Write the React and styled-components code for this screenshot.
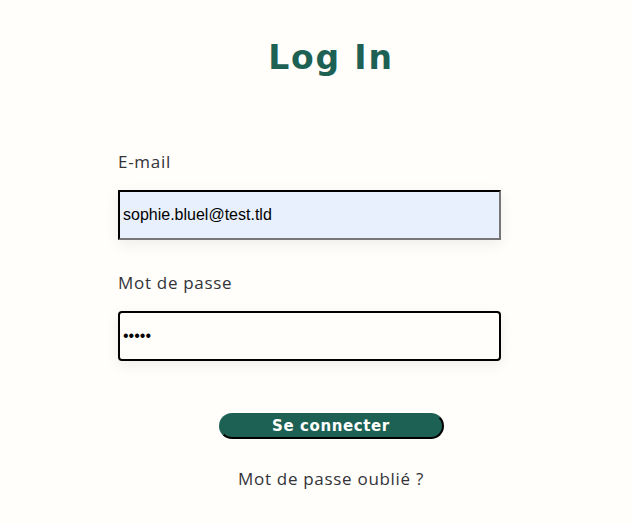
import React from "react";
import styled, { createGlobalStyle } from "styled-components";

const GlobalStyle = createGlobalStyle`
  body {
    margin: 0;
    background-color: #fffefb;
    font-family: "Open Sans", "Liberation Sans", sans-serif;
  }
`;

const Page = styled.main`
  display: flex;
  padding: 38px 0 40px 118px;
`;

const Section = styled.section`
  width: 426px;
  display: flex;
  flex-direction: column;
  align-items: center;
`;

const Title = styled.h2`
  margin: 0;
  font-family: "DejaVu Sans", sans-serif;
  font-weight: 700;
  font-size: 33px;
  line-height: 40px;
  letter-spacing: 1.8px;
  color: #1d6154;
`;

const Form = styled.form`
  width: 100%;
  display: flex;
  flex-direction: column;
  align-items: flex-start;
  margin-top: 74px;
`;

const Label = styled.label`
  font-size: 17px;
  line-height: 20px;
  letter-spacing: 0.7px;
  color: #333338;
  margin-top: ${(props) => (props.first ? "0" : "33px")};
`;

const Input = styled.input`
  box-sizing: border-box;
  width: 383px;
  height: 50px;
  margin-top: 18px;
  padding: 0 3px;
  font-family: "Liberation Sans", Arial, sans-serif;
  font-size: 16px;
  color: #000;
  background-color: ${(props) => (props.autofilled ? "#e8f0fe" : "#fffefb")};
  border: 2px ${(props) => (props.focused ? "solid" : "inset")};
  border-color: ${(props) =>
    props.focused ? "#000" : "#222 #767676 #767676 #222"};
  border-radius: ${(props) => (props.focused ? "4px" : "0")};
  box-shadow: 0px 4px 14px rgba(0, 0, 0, 0.07);
  outline: none;
`;

const Submit = styled.button`
  box-sizing: border-box;
  align-self: center;
  width: 225px;
  height: 26px;
  margin-top: 52px;
  padding: 0;
  font-family: "DejaVu Sans", sans-serif;
  font-weight: 700;
  font-size: 15px;
  letter-spacing: 0.6px;
  color: #fff;
  background-color: #1d6154;
  border: 2px solid;
  border-color: #1d6154 #000 #000 #1d6154;
  border-radius: 60px;
  cursor: pointer;
`;

const Forgot = styled.a`
  align-self: center;
  margin-top: 30px;
  font-size: 17px;
  line-height: 20px;
  letter-spacing: 0.7px;
  color: #333338;
  text-decoration: none;
`;

const App = () => {
  return (
    <>
      <GlobalStyle />
      <Page>
        <Section>
          <Title>Log In</Title>
          <Form onSubmit={(e) => e.preventDefault()}>
            <Label first htmlFor="email">E-mail</Label>
            <Input
              id="email"
              type="email"
              autofilled
              defaultValue="sophie.bluel@test.tld"
            />
            <Label htmlFor="password">Mot de passe</Label>
            <Input id="password" type="password" focused defaultValue="S0phi" />
            <Submit type="submit">Se connecter</Submit>
            <Forgot href="#">Mot de passe oublié ?</Forgot>
          </Form>
        </Section>
      </Page>
    </>
  );
};

export default App;
